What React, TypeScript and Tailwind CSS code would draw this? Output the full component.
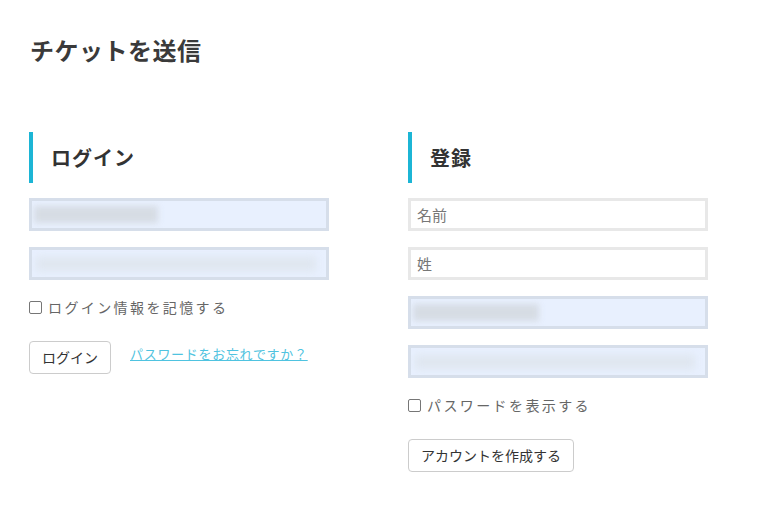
import React from 'react'

const font = { fontFamily: '"Noto Sans CJK JP", "Noto Sans", sans-serif' }

function Autofilled({ width }: { width: string }) {
  return (
    <div className="h-[33px] w-[300px] border-[3px] border-[#d6deea] bg-[#e8f0fe] flex items-center overflow-hidden">
      <div className={`h-[17px] ${width} bg-[#d6dce4] blur-[3px] ml-[2px]`} />
    </div>
  )
}

function AutofilledLong() {
  return (
    <div className="h-[33px] w-[300px] border-[3px] border-[#d6deea] bg-[#e8f0fe] flex items-center overflow-hidden">
      <div className="h-[14px] w-[280px] bg-[#dfe6ef] blur-[4px] ml-[4px]" />
    </div>
  )
}

function Plain({ placeholder }: { placeholder: string }) {
  return (
    <input
      placeholder={placeholder}
      className="h-[33px] w-[300px] border-[3px] border-[#e8e8e8] bg-white px-[6px] text-[15px] text-[#333] placeholder:text-[#777] outline-none"
      style={font}
    />
  )
}

function Heading({ children }: { children: React.ReactNode }) {
  return (
    <div className="h-[51px] border-l-4 border-[#1cb5d5] pl-[18px] flex items-center">
      <h2 className="text-[20px] font-bold text-[#333] tracking-[1px]">{children}</h2>
    </div>
  )
}

function Check({ label }: { label: string }) {
  return (
    <label className="flex items-center gap-[6px] text-[14px] text-[#666] tracking-[2.4px]">
      <span className="w-[13px] h-[13px] border border-[#767676] rounded-[2px] bg-white" />
      {label}
    </label>
  )
}

export default function App() {
  return (
    <div className="min-h-screen bg-white px-[29px] pt-[34px]" style={font}>
      <h1 className="text-[24px] leading-[32px] font-bold text-[#3a3a3a] tracking-[0.5px] pl-[1px]">チケットを送信</h1>

      <div className="mt-[66px] flex gap-[79px]">
        <div className="w-[300px]">
          <Heading>ログイン</Heading>
          <div className="mt-[15px] flex flex-col gap-[16px]">
            <Autofilled width="w-[124px]" />
            <AutofilledLong />
          </div>
          <div className="mt-[17px]">
            <Check label="ログイン情報を記憶する" />
          </div>
          <div className="mt-[23px] flex items-start gap-[19px]">
            <button className="h-[33px] px-[12px] border border-[#ccc] rounded-[4px] bg-white text-[14px] text-[#333]">
              ログイン
            </button>
            <a href="#" className="mt-[3px] text-[13px] text-[#4fc3e0] underline tracking-[0.7px]">
              パスワードをお忘れですか？
            </a>
          </div>
        </div>

        <div className="w-[300px]">
          <Heading>登録</Heading>
          <div className="mt-[15px] flex flex-col gap-[16px]">
            <Plain placeholder="名前" />
            <Plain placeholder="姓" />
            <Autofilled width="w-[126px]" />
            <AutofilledLong />
          </div>
          <div className="mt-[17px]">
            <Check label="パスワードを表示する" />
          </div>
          <div className="mt-[23px]">
            <button className="h-[33px] px-[12px] border border-[#ccc] rounded-[4px] bg-white text-[14px] text-[#333]">
              アカウントを作成する
            </button>
          </div>
        </div>
      </div>
    </div>
  )
}
